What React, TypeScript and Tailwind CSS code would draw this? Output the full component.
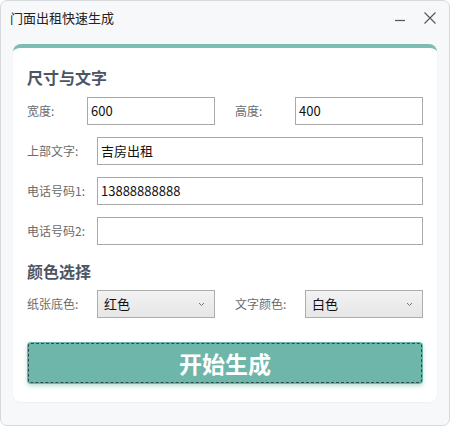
import React from "react";

const font = { fontFamily: '"Noto Sans CJK SC", "Noto Sans", sans-serif' };

function Label({ text, w }: { text: string; w: string }) {
  return <span className={`${w} shrink-0 text-[12px] text-[#6b6b6b]`}>{text}</span>;
}

function Field({ value, className }: { value: string; className: string }) {
  return (
    <div
      className={`${className} flex h-[28px] items-center border border-[#a9a9a9] bg-white px-[3px] text-[13px] text-[#111]`}
    >
      {value}
    </div>
  );
}

function Select({ value, className }: { value: string; className: string }) {
  return (
    <div
      className={`${className} flex h-[28px] items-center justify-between border border-[#adadad] bg-gradient-to-b from-[#f2f2f2] to-[#e6e6e6] pl-[6px] pr-[9px] text-[13px] text-[#111]`}
    >
      <span>{value}</span>
      <svg width="7" height="5" viewBox="0 0 7 5" fill="none">
        <path d="M1 1l2.5 2.5L6 1" stroke="#777" strokeWidth="1" />
      </svg>
    </div>
  );
}

export default function App() {
  return (
    <div style={font} className="h-[426px] w-[450px] bg-white">
      <div className="flex h-[426px] w-[450px] flex-col rounded-[7px] border border-[#d6d9dd] bg-[#f6f8fa]">
        <div className="flex h-[34px] shrink-0 items-center justify-between pl-[9px] pr-[12px]">
          <span className="text-[13px] text-[#222]">门面出租快速生成</span>
          <div className="flex items-center gap-[16px]">
            <svg width="14" height="14" viewBox="0 0 14 14">
              <path d="M2 9.5h10" stroke="#555" strokeWidth="1.2" />
            </svg>
            <svg width="14" height="14" viewBox="0 0 14 14">
              <path d="M1.5 1.5l11 11M12.5 1.5l-11 11" stroke="#555" strokeWidth="1.1" />
            </svg>
          </div>
        </div>
        <div className="px-[12px] pt-[9px]">
          <div className="flex flex-col rounded-[8px] border-t-[4px] border-[#7dbdb1] bg-white px-[14px] pb-[18px] pt-[17px] shadow-[0_1px_2px_rgba(0,0,0,0.04)]">
            <h2 className="h-[24px] text-[16px] font-bold leading-[24px] text-[#4b5563]">尺寸与文字</h2>
            <div className="mt-[8px] flex flex-col gap-[12px]">
              <div className="flex items-center">
                <Label text="宽度:" w="w-[60px]" />
                <Field value="600" className="w-[128px]" />
                <span className="w-[20px]" />
                <Label text="高度:" w="w-[60px]" />
                <Field value="400" className="w-[128px]" />
              </div>
              <div className="flex items-center">
                <Label text="上部文字:" w="w-[70px]" />
                <Field value="吉房出租" className="flex-1" />
              </div>
              <div className="flex items-center">
                <Label text="电话号码1:" w="w-[70px]" />
                <Field value="13888888888" className="flex-1" />
              </div>
              <div className="flex items-center">
                <Label text="电话号码2:" w="w-[70px]" />
                <Field value="" className="flex-1" />
              </div>
            </div>
            <h2 className="mt-[14px] h-[24px] text-[16px] font-bold leading-[24px] text-[#4b5563]">颜色选择</h2>
            <div className="mt-[7px] flex items-center">
              <Label text="纸张底色:" w="w-[70px]" />
              <Select value="红色" className="w-[118px]" />
              <span className="w-[20px]" />
              <Label text="文字颜色:" w="w-[70px]" />
              <Select value="白色" className="w-[118px]" />
            </div>
            <button className="mt-[24px] flex h-[42px] items-center justify-center rounded-[4px] bg-[#6fb6aa] text-[23px] font-bold text-white shadow-[0_2px_4px_rgba(111,182,170,0.45)] outline-1 -outline-offset-2 outline-dashed outline-[#2c4b47]">
              开始生成
            </button>
          </div>
        </div>
      </div>
    </div>
  );
}
